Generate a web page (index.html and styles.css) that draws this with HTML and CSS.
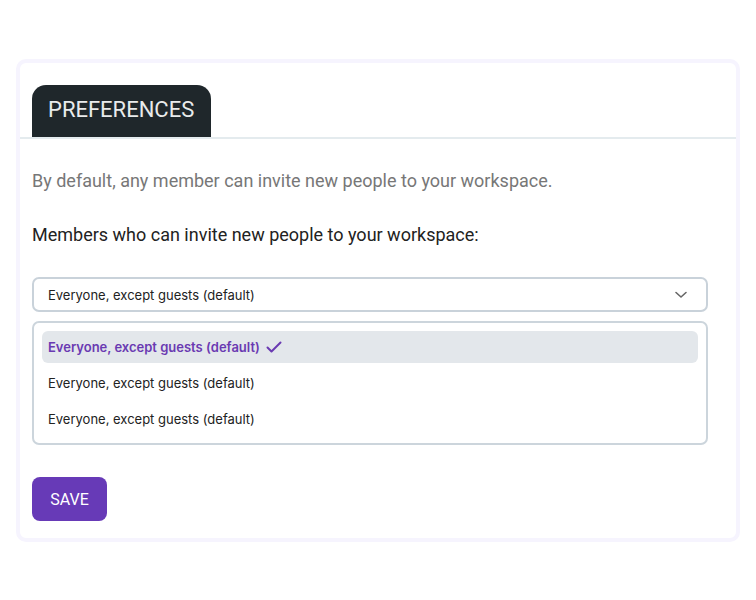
FILE: index.html
```html
<!DOCTYPE html>
<html>
<head>
<meta charset="utf-8">
<link rel="stylesheet" href="styles.css">
</head>
<body>
<div class="card">
  <div class="tabs">
    <div class="tab">PREFERENCES</div>
  </div>
  <div class="content">
    <p class="desc">By default, any member can invite new people to your workspace.</p>
    <p class="label">Members who can invite new people to your workspace:</p>
    <div class="select">
      <span>Everyone, except guests (default)</span>
      <svg class="chev" width="14" height="8" viewBox="0 0 14 8"><path d="M2 1.5 L7 6 L12 1.5" fill="none" stroke="#666" stroke-width="1.6" stroke-linecap="round" stroke-linejoin="round"/></svg>
    </div>
    <div class="list">
      <div class="item active"><span>Everyone, except guests (default)</span>
        <svg width="16" height="12" viewBox="0 0 16 12"><path d="M1.5 6.5 L5.5 10.5 L14.5 1.5" fill="none" stroke="#6a3ab2" stroke-width="2" stroke-linecap="round" stroke-linejoin="round"/></svg>
      </div>
      <div class="item"><span>Everyone, except guests (default)</span></div>
      <div class="item"><span>Everyone, except guests (default)</span></div>
    </div>
    <button class="save">SAVE</button>
  </div>
</div>
</body>
</html>
```
FILE: styles.css
```css
* { box-sizing: border-box; }
body {
  margin: 0;
  background: #fff;
  font-family: Roboto, "Liberation Sans", sans-serif;
}
.card {
  margin: 59px 16px 0 16px;
  width: 724px;
  border: 4px solid #f6f4fe;
  border-radius: 10px;
  background: #fff;
  padding-top: 22px;
  padding-bottom: 17px;
}
.tabs {
  display: flex;
  padding-left: 12px;
  border-bottom: 2px solid #e4ebee;
}
.tab {
  background: #1f272b;
  color: #e9ebec;
  font-size: 22px;
  height: 52px;
  line-height: 50px;
  padding: 0 17px 0 16px;
  border-radius: 14px 14px 0 0;
}
.content {
  padding: 0 28px 0 12px;
}
.desc {
  margin: 30px 0 0;
  font-size: 18px;
  line-height: 24px;
  color: #777;
}
.label {
  margin: 30px 0 0;
  font-size: 18px;
  line-height: 24px;
  color: #222;
}
.select {
  margin-top: 30px;
  height: 35px;
  border: 2px solid #c9d2da;
  border-radius: 7px;
  display: flex;
  align-items: center;
  justify-content: space-between;
  padding: 0 18px 0 14px;
  font-family: Inter, "Noto Sans", sans-serif;
  font-size: 13px;
  color: #222;
}
.chev { display: block; }
.list {
  margin-top: 9px;
  border: 2px solid #ccd5dc;
  border-radius: 7px;
  padding: 8px;
  display: flex;
  flex-direction: column;
  gap: 4px;
}
.item {
  height: 32px;
  display: flex;
  align-items: center;
  gap: 6px;
  padding: 0 6px;
  border-radius: 6px;
  font-family: Inter, "Noto Sans", sans-serif;
  font-size: 13px;
  color: #222;
}
.item.active {
  background: #e3e7eb;
  color: #6a3ab2;
  font-weight: 600;
}
.item svg { display: block; }
.save {
  margin-top: 32px;
  height: 44px;
  width: 75px;
  border: none;
  border-radius: 8px;
  background: #673ab7;
  color: #fff;
  font-family: Roboto, "Liberation Sans", sans-serif;
  font-size: 16px;
  padding: 0;
  display: block;
}
```
